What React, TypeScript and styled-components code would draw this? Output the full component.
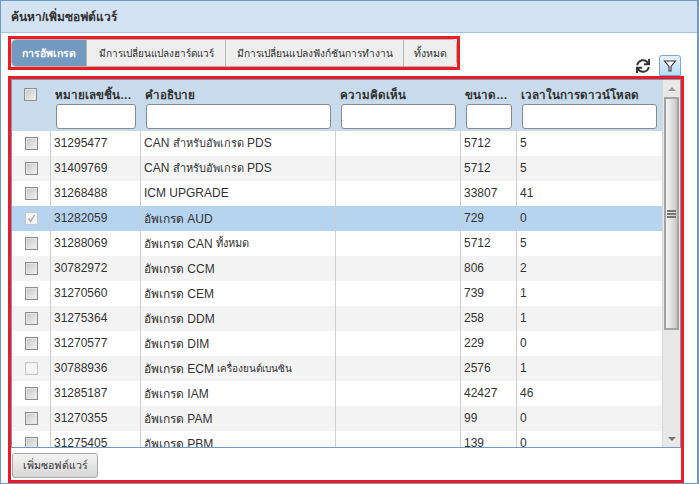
import React from "react";
import styled, { createGlobalStyle } from "styled-components";
import { FaSync } from "react-icons/fa";

const Global = createGlobalStyle`
  html, body { margin: 0; padding: 0; background: #fff; }
  body { font-family: "Liberation Sans", "Noto Sans", sans-serif; font-size: 12px; color: #333; }
`;

const Window = styled.div`
  width: 699px; height: 484px; box-sizing: border-box; display: flex; flex-direction: column;
  border: 1px solid #6d9bc5; border-right-width: 2px; background: #fff; overflow: hidden;
`;
const Title = styled.div`
  height: 32px; flex: none; box-sizing: border-box; background: #d4e3f3; border-bottom: 1px solid #a5c3df;
  display: flex; align-items: center; padding-left: 10px; font-weight: bold; font-size: 12px; color: #333;
`;
const Body = styled.div`
  flex: 1; display: flex; flex-direction: column; padding: 2px 13px 0 7px; min-height: 0;
`;
const TopRow = styled.div`
  display: flex; justify-content: space-between; align-items: flex-end; height: 41px; flex: none;
`;
const TabsFrame = styled.div`
  border: 3px solid #ed1c24; height: 34px; box-sizing: border-box; align-self: flex-start; display: flex;
  margin-top: 1px;
`;
const Tabs = styled.div`
  display: flex; height: 28px; box-sizing: border-box; border: 1px solid #b5b5b5; border-radius: 5px; overflow: hidden;
  background: #eee;
`;
const Tab = styled.div<{ $w: number; $size: number; $active?: boolean }>`
  width: ${(p) => p.$w}px; box-sizing: border-box; display: flex; align-items: center; justify-content: center;
  font-size: ${(p) => p.$size}px; white-space: nowrap; border-right: 1px solid #b5b5b5;
  background: ${(p) => (p.$active ? "#7299c0" : "#eee")};
  color: ${(p) => (p.$active ? "#fff" : "#333")};
  font-weight: ${(p) => (p.$active ? "bold" : "normal")};
  &:last-child { border-right: 0; }
`;
const Tools = styled.div`
  display: flex; align-items: center; gap: 9px; margin-right: 3px;
`;
const ToolIcon = styled.span`
  display: flex; color: #333; font-size: 14px;
`;
const FilterButton = styled.div`
  width: 22px; height: 21px; box-sizing: border-box; border: 1px solid #7aa6cf; border-radius: 3px 3px 0 0;
  background: linear-gradient(#e8f2fb, #b8dcf8); display: flex; align-items: center; justify-content: center;
`;
const GridFrame = styled.div`
  flex: 1; min-height: 0; box-sizing: border-box; border: 3px solid #ed1c24; display: flex; flex-direction: column;
`;
const Grid = styled.div`
  height: 369px; flex: none; box-sizing: border-box; border: 1px solid #6f9bc4; display: flex; overflow: hidden;
`;
const GridMain = styled.div`
  flex: 1; min-width: 0; display: flex; flex-direction: column;
`;
const Columns = `39px 90px 195px 125px 56px 1fr`;
const HeadRow = styled.div`
  height: 51px; flex: none; background: #c8dbec; display: grid; grid-template-columns: ${Columns};
`;
const HeadCell = styled.div`
  min-width: 0; box-sizing: border-box; padding: 5px 5px 0 5px; display: flex; flex-direction: column;
`;
const HeadCheck = styled.div`
  padding: 8px 0 0 12px;
`;
const HeadLabel = styled.div`
  font-weight: bold; font-size: 11.6px; height: 19px; line-height: 19px; margin-left: -1px; white-space: nowrap; overflow: hidden; text-overflow: ellipsis; color: #333;
`;
const FilterInput = styled.input`
  width: 100%; height: 25px; flex: none; box-sizing: border-box; border: 1px solid #8a8a8a; border-radius: 3px; background: #fff; padding: 0; margin: 0;
`;
const Rows = styled.div`
  flex: 1; min-height: 0; overflow: hidden;
`;
const Row = styled.div<{ $odd: boolean; $selected?: boolean }>`
  height: 25px; display: grid; grid-template-columns: ${Columns};
  background: ${(p) => (p.$selected ? "#b6d3f0" : p.$odd ? "#f3f3f3" : "#fff")};
`;
const Cell = styled.div<{ $plain?: boolean }>`
  min-width: 0; box-sizing: border-box; padding: 0 0 1px 3px; display: flex; align-items: center; font-size: 12px; white-space: pre; overflow: hidden;
  border-right: ${(p) => (p.$plain ? "0" : "1px solid #cfcfcf")};
`;
const CheckCell = styled(Cell)`
  padding-left: 13px;
`;
const Thai = styled.span<{ $size: number }>`
  font-size: ${(p) => p.$size}px;
`;
const CheckBox = styled.span<{ $off?: boolean }>`
  width: 13px; height: 13px; box-sizing: border-box; display: inline-flex; align-items: center; justify-content: center;
  border: 1px solid ${(p) => (p.$off ? "#c8c8c8" : "#8e8e8e")};
  box-shadow: inset 0 0 0 1px ${(p) => (p.$off ? "#f0f0f0" : "#e4e4e4")};
  background: ${(p) => (p.$off ? "#f4f4f4" : "linear-gradient(135deg, #c4c4c4, #f4f4f4)")};
`;
const Scrollbar = styled.div`
  width: 18px; flex: none; background: #e8e8e8; display: flex; flex-direction: column; align-items: center; border-left: 1px solid #d8d8d8; box-sizing: border-box;
`;
const Arrow = styled.div<{ $down?: boolean }>`
  height: 17px; flex: none; display: flex; align-items: center; justify-content: center;
  &::before { content: ""; border-left: 4px solid transparent; border-right: 4px solid transparent;
    ${(p) => (p.$down ? "border-top: 4px solid #777;" : "border-bottom: 4px solid #999;")} }
`;
const Thumb = styled.div`
  width: 15px; height: 233px; flex: none; box-sizing: border-box; border: 2px solid #a4a4a4;
  background: linear-gradient(90deg, #f4f4f4, #dcdcdc 60%, #c4c4c4); display: flex; flex-direction: column; align-items: center; justify-content: center; gap: 1px;
`;
const Grip = styled.span`
  width: 9px; height: 2px; background: #777;
`;
const ScrollGap = styled.div`
  flex: 1;
`;
const Footer = styled.div`
  flex: 1; display: flex; align-items: flex-start; padding: 5px 0 0 1px;
`;
const AddButton = styled.button`
  width: 86px; height: 25px; box-sizing: border-box; margin: 0; padding: 0; border: 1px solid #a9a9a9; border-radius: 3px;
  background: linear-gradient(#f4f4f4, #d6d6d6); font: 10.6px "Liberation Sans", "Noto Sans", sans-serif; color: #333;
`;

type Rec = { id: string; desc: React.ReactNode; size: string; time: string; sel?: boolean; off?: boolean };
const data: Rec[] = [
  { id: "31295477", desc: <>CAN <Thai $size={11}>สำหรับอัพเกรด</Thai> PDS</>, size: "5712", time: "5" },
  { id: "31409769", desc: <>CAN <Thai $size={11}>สำหรับอัพเกรด</Thai> PDS</>, size: "5712", time: "5" },
  { id: "31268488", desc: "ICM UPGRADE", size: "33807", time: "41" },
  { id: "31282059", desc: "อัพเกรด AUD", size: "729", time: "0", sel: true },
  { id: "31288069", desc: <>อัพเกรด CAN <Thai $size={11}>ทั้งหมด</Thai></>, size: "5712", time: "5" },
  { id: "30782972", desc: "อัพเกรด CCM", size: "806", time: "2" },
  { id: "31270560", desc: "อัพเกรด CEM", size: "739", time: "1" },
  { id: "31275364", desc: "อัพเกรด DDM", size: "258", time: "1" },
  { id: "31270577", desc: "อัพเกรด DIM", size: "229", time: "0" },
  { id: "30788936", desc: <>อัพเกรด ECM <Thai $size={10}>เครื่องยนต์เบนซิน</Thai></>, size: "2576", time: "1", off: true },
  { id: "31285187", desc: "อัพเกรด IAM", size: "42427", time: "46" },
  { id: "31270355", desc: "อัพเกรด PAM", size: "99", time: "0" },
  { id: "31275405", desc: "อัพเกรด PBM", size: "139", time: "0" },
];

const tabs: [string, number, number][] = [
  ["การอัพเกรด", 75, 10.5],
  ["มีการเปลี่ยนแปลงฮาร์ดแวร์", 139, 10],
  ["มีการเปลี่ยนแปลงฟังก์ชันการทำงาน", 178, 10.2],
  ["ทั้งหมด", 52, 10.6],
];
const heads = ["หมายเลขชิ้นส่วน", "คำอธิบาย", "ความคิดเห็น", "ขนาดไฟล์", "เวลาในการดาวน์โหลด"];

const Check = ({ checked, off }: { checked?: boolean; off?: boolean }) => (
  <CheckBox $off={off || checked}>
    {checked && (
      <svg width="9" height="9" viewBox="0 0 9 9">
        <path d="M1.5 4.5 L3.5 7.5 L7.5 1" fill="none" stroke="#aab" strokeWidth="1.4" />
      </svg>
    )}
  </CheckBox>
);

export default function App() {
  return (
    <>
      <Global />
      <Window>
        <Title>ค้นหา/เพิ่มซอฟต์แวร์</Title>
        <Body>
          <TopRow>
            <TabsFrame>
              <Tabs>
                {tabs.map(([t, w, s], i) => (
                  <Tab key={t} $w={w} $size={s} $active={i === 0}>{t}</Tab>
                ))}
              </Tabs>
            </TabsFrame>
            <Tools>
              <ToolIcon><FaSync /></ToolIcon>
              <FilterButton>
                <svg width="14" height="14" viewBox="0 0 14 14">
                  <path d="M1.5 2 H12.5 L8 7.5 V12 H6 V7.5 Z" fill="#fff" stroke="#333" strokeWidth="1.1" />
                </svg>
              </FilterButton>
            </Tools>
          </TopRow>
          <GridFrame>
            <Grid>
              <GridMain>
                <HeadRow>
                  <HeadCheck><Check /></HeadCheck>
                  {heads.map((h) => (
                    <HeadCell key={h}>
                      <HeadLabel>{h}</HeadLabel>
                      <FilterInput />
                    </HeadCell>
                  ))}
                </HeadRow>
                <Rows>
                  {data.map((r, i) => (
                    <Row key={r.id} $odd={i % 2 === 1} $selected={r.sel}>
                      <CheckCell><Check checked={r.sel} off={r.off} /></CheckCell>
                      <Cell>{r.id}</Cell>
                      <Cell>{r.desc}</Cell>
                      <Cell />
                      <Cell>{r.size}</Cell>
                      <Cell $plain>{r.time}</Cell>
                    </Row>
                  ))}
                </Rows>
              </GridMain>
              <Scrollbar>
                <Arrow />
                <Thumb><Grip /><Grip /><Grip /></Thumb>
                <ScrollGap />
                <Arrow $down />
              </Scrollbar>
            </Grid>
            <Footer>
              <AddButton>เพิ่มซอฟต์แวร์</AddButton>
            </Footer>
          </GridFrame>
        </Body>
      </Window>
    </>
  );
}
